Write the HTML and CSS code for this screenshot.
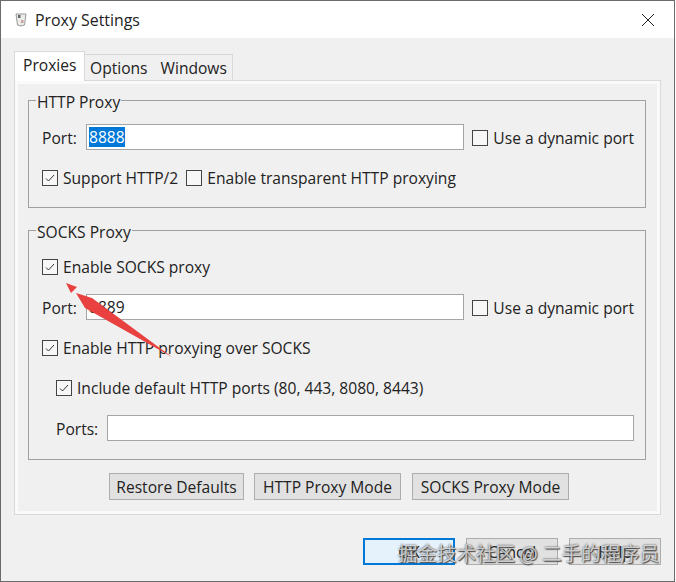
FILE: index.html
```html
<!DOCTYPE html>
<html lang="en">
<head>
<meta charset="utf-8">
<title>Proxy Settings</title>
<link rel="stylesheet" href="styles.css">
</head>
<body>
<div class="window">
  <header class="titlebar">
    <svg class="app-icon" width="14" height="16" viewBox="0 0 14 16"><path d="M2 2h10l-1.500 11q-3.500 2-7 0z" fill="#ecece8" stroke="#999" stroke-width="1"/><path d="M4 3h2.500v3H4z" fill="#666"/><path d="M7 8h2.500v3H7z" fill="#c9a0a0"/></svg>
    <span class="title">Proxy Settings</span>
    <svg class="close" width="14" height="14" viewBox="0 0 14 14"><path d="M1 1l12 12M13 1L1 13" stroke="#222" stroke-width="1" fill="none"/></svg>
  </header>
  <main class="content">
    <nav class="tabs">
      <span class="tab active">Proxies</span>
      <div class="tab-rest"><span class="tab">Options</span><span class="tab">Windows</span></div>
    </nav>
    <section class="pane">
      <fieldset class="group http">
        <legend>HTTP Proxy</legend>
        <div class="row port-row">
          <label class="field-label">Port:</label>
          <div class="input"><span class="selected">8888</span></div>
          <label class="check"><span class="box"></span>Use a dynamic port</label>
        </div>
        <div class="row check-row">
          <label class="check"><span class="box on"><svg viewBox="0 0 14 14"><path d="M3 7.500l2.500 2.500 5.500-6" fill="none" stroke="#333" stroke-width="1"/></svg></span>Support HTTP/2</label>
          <label class="check"><span class="box"></span>Enable transparent HTTP proxying</label>
        </div>
      </fieldset>
      <fieldset class="group socks">
        <legend>SOCKS Proxy</legend>
        <div class="row first">
          <label class="check"><span class="box on"><svg viewBox="0 0 14 14"><path d="M3 7.500l2.500 2.500 5.500-6" fill="none" stroke="#333" stroke-width="1"/></svg></span>Enable SOCKS proxy</label>
        </div>
        <div class="row port-row">
          <label class="field-label">Port:</label>
          <div class="input">8889</div>
          <label class="check"><span class="box"></span>Use a dynamic port</label>
        </div>
        <div class="row check-row">
          <label class="check"><span class="box on"><svg viewBox="0 0 14 14"><path d="M3 7.500l2.500 2.500 5.500-6" fill="none" stroke="#333" stroke-width="1"/></svg></span>Enable HTTP proxying over SOCKS</label>
        </div>
        <div class="row check-row indent">
          <label class="check"><span class="box on"><svg viewBox="0 0 14 14"><path d="M3 7.500l2.500 2.500 5.500-6" fill="none" stroke="#333" stroke-width="1"/></svg></span>Include default HTTP ports (80, 443, 8080, 8443)</label>
        </div>
        <div class="row ports-row indent">
          <label class="field-label">Ports:</label>
          <div class="input"></div>
        </div>
      </fieldset>
      <div class="mode-buttons">
        <button class="btn restore">Restore Defaults</button>
        <button class="btn http-mode">HTTP Proxy Mode</button>
        <button class="btn socks-mode">SOCKS Proxy Mode</button>
      </div>
    </section>
    <footer class="actions">
      <button class="btn action primary">OK</button>
      <button class="btn action">Cancel</button>
      <button class="btn action">Help</button>
    </footer>
  </main>
</div>
<svg class="arrow" width="676" height="582" viewBox="0 0 676 582"><path d="M66 283L77 287 71 293zM76 293L92 298 172 357 85 308z" fill="#e8413f"/></svg>
<div class="watermark">掘金技术社区 @ 二手的程序员</div>
</body>
</html>
```
FILE: styles.css
```css
* { box-sizing: border-box; }
html, body { margin: 0; padding: 0; }
body {
  width: 676px; height: 582px; overflow: hidden; position: relative; background: #fff;
  font-family: "Open Sans", "Noto Sans", "Liberation Sans", sans-serif;
  font-size: 15.6px; color: #222;
}
.window {
  width: 675px; height: 582px; border: 1px solid #6b6b6b;
  background: #f0f0f0; display: flex; flex-direction: column;
}
.titlebar {
  height: 37px; flex: none; background: #fff; display: flex; align-items: center;
  padding: 0 19px 0 13px;
}
.app-icon { flex: none; }
.title { margin-left: 7px; font-size: 15.9px; flex: 1; }
.close { flex: none; }
.content { flex: 1; padding: 13px 13px 0; display: flex; flex-direction: column; }
.tabs { display: flex; align-items: flex-end; height: 29px; flex: none; }
.tab { display: block; padding: 0 5px; }
.tab.active {
  width: 71px; height: 30px; margin-bottom: -1px; background: #fff; border: 1px solid #d9d9d9; border-bottom: 0;
  padding: 2px 0 0 8px; position: relative; z-index: 1;
}
.tab-rest {
  display: flex; height: 26px; background: #f0f0f0; border: 1px solid #d9d9d9; border-left: 0; border-bottom: 0;
  align-items: center;
}
.tab-rest .tab:last-child { padding-left: 8px; }
.pane {
  height: 435px; flex: none; background: #f0f0f0; border: 1px solid #d9d9d9;
  box-shadow: inset 0 0 0 3px #fafafa; padding: 9px 14px 0 13px;
}
.group {
  margin: 0; min-width: 0; border: 1px solid #a0a0a0; padding: 0 11px 0 13px; display: block;
}
.group legend { padding: 0 1px; margin-left: -6px; line-height: 24px; height: 20px; }
.http { height: 118px; }
.socks { height: 240px; margin-top: 12px; }
.row { display: flex; align-items: center; }
.port-row { height: 26px; }
.check-row { height: 24px; }
.http .port-row { margin-top: 14px; }
.http .check-row { margin-top: 16px; }
.check-row .check + .check { margin-left: 8px; }
.socks .first { height: 24px; margin-top: 15px; }
.socks .port-row { margin-top: 15px; }
.socks .check-row { margin-top: 16px; }
.socks .indent { margin-left: 14px; }
.socks .ports-row { height: 26px; margin-top: 15px; }
.field-label { flex: none; width: 44px; margin-top: 2px; }
.ports-row .field-label { width: 51px; }
.input {
  flex: 1; height: 26px; background: #fff; border: 1px solid #a5a5a5; padding-left: 2px; line-height: 25px;
}
.selected { background: #0078d7; color: #fff; display: inline-block; line-height: 20px; }
.port-row .check { margin-left: 8px; margin-top: 2px; }
.check { display: inline-flex; align-items: center; white-space: nowrap; }
.box {
  width: 16px; height: 16px; flex: none; border: 1px solid #444; background: #f7f7f7; margin-right: 5px; display: block;
}
.box svg { display: block; width: 14px; height: 14px; }
.mode-buttons { display: flex; margin-top: 13px; padding-left: 81px; }
.btn {
  font: inherit; color: #222; height: 27px; padding: 0; background: #e1e1e1; border: 1px solid #adadad; border-radius: 0;
  display: block;
}
.restore { width: 135px; }
.http-mode { width: 147px; margin-left: 10px; }
.socks-mode { width: 157px; margin-left: 11px; }
.actions { display: flex; justify-content: flex-end; margin-top: 23px; gap: 11px; }
.action { width: 92px; }
.primary { background: #e5f1fb; border: 2px solid #0078d7; }
.arrow { position: absolute; left: 0; top: 0; pointer-events: none; }
.watermark {
  position: absolute; left: 398px; top: 540px; font-family: "Noto Sans CJK SC", sans-serif; font-size: 19.5px; line-height: 26px;
  color: rgba(255,255,255,.7); text-shadow: 0 0 2px #333, 1px 1px 1px #555; white-space: nowrap;
}
```
